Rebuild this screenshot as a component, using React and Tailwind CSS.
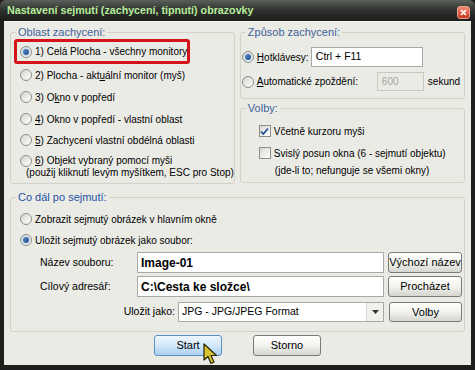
import React from 'react';

const Radio = ({ checked }) => (
  <span className="flex h-[12px] w-[12px] shrink-0 items-center justify-center rounded-full border border-[#8d8e8a] bg-gradient-to-br from-[#d4d4cf] to-white">
    {checked && (
      <span className="h-[6px] w-[6px] rounded-full bg-gradient-to-br from-[#5a8cc6] to-[#1e4f8c] ring-1 ring-[#cfe0f0]" />
    )}
  </span>
);

const Check = ({ checked }) => (
  <span className="flex h-[12px] w-[12px] shrink-0 items-center justify-center border border-[#8d8e8a] bg-gradient-to-br from-[#d8d8d3] to-white">
    {checked && (
      <svg width="9" height="9" viewBox="0 0 9 9">
        <path d="M1 4.5 L3.3 7 L8 1.5" fill="none" stroke="#26509a" strokeWidth="1.8" />
      </svg>
    )}
  </span>
);

const U = ({ children }) => <span className="underline underline-offset-1">{children}</span>;

const Button = ({ children, className = '' }) => (
  <div
    className={`flex items-center justify-center rounded-[3px] border border-[#7a7a78] bg-gradient-to-b from-white via-[#f2f2ee] to-[#d6d6d0] text-[11px] text-black ${className}`}
  >
    {children}
  </div>
);

const Legend = ({ children, color = 'text-[#3d5f98]' }) => (
  <legend className={`ml-[5px] px-[2px] text-[11px] leading-[13px] ${color}`}>{children}</legend>
);

export default function App() {
  return (
    <div className="relative flex h-[370px] w-[475px] flex-col whitespace-nowrap bg-[#1f201e] font-['Liberation_Sans',Arial,sans-serif] text-[10px] text-black">
      {/* title bar */}
      <div className="flex h-[21px] items-center justify-between rounded-t-[6px] bg-gradient-to-b from-[#5b605a] via-[#2e312d] to-[#1b1c1a] pl-[7px] pr-[5px]">
        <span className="text-[10.7px] font-bold text-[#b8ec9c]">Nastavení sejmutí (zachycení, tipnutí) obrazovky</span>
        <span className="mt-[4px] flex h-[13px] w-[13px] items-center justify-center rounded-[3px] border border-[#e9a08c] bg-gradient-to-b from-[#f08a70] to-[#c8301a]">
          <svg width="7" height="7" viewBox="0 0 7 7">
            <path d="M1 1 L6 6 M6 1 L1 6" stroke="white" strokeWidth="1.6" />
          </svg>
        </span>
      </div>

      {/* client area */}
      <div className="mx-[4px] mb-[5px] flex flex-1 flex-col border-t border-[#f6f6f2] bg-[#ebebe6] px-[6px]">
        <div className="mt-[4px] flex gap-[5px]">
          {/* Oblast zachycení */}
          <fieldset className="h-[158px] w-[222px] rounded-[3px] border border-[#d2d2c8]">
            <Legend>Oblast zachycení:</Legend>
            <div className="ml-[3px] flex h-[25px] w-[176px] items-center gap-[3px] rounded-[3px] border-[3px] border-[#d4141a] pl-[3px]">
              <Radio checked />
              <span>1) Celá Plocha - všechny monitory</span>
            </div>
            <div className="flex h-[22px] items-center gap-[3px] pl-[9px]">
              <Radio />
              <span>2) Plocha - akt<U>u</U>ální monitor (myš)</span>
            </div>
            <div className="flex h-[22px] items-center gap-[3px] pl-[9px]">
              <Radio />
              <span>3) O<U>k</U>no v popředí</span>
            </div>
            <div className="flex h-[22px] items-center gap-[3px] pl-[9px]">
              <Radio />
              <span><U>4</U>) Okno v popředí - vlastní oblast</span>
            </div>
            <div className="flex h-[20px] items-center gap-[3px] pl-[9px]">
              <Radio />
              <span><U>5</U>) Zachycení vlastní obdélná oblasti</span>
            </div>
            <div className="flex gap-[3px] pl-[9px] pt-[5px]">
              <Radio />
              <div className="flex flex-col leading-[12px]">
                <span><U>6</U>) Objekt vybraný pomocí myši</span>
                <span className="-ml-[9px]">(použij kliknutí levým myšítkem, ESC pro Stop)</span>
              </div>
            </div>
          </fieldset>

          <div className="flex w-[228px] flex-col gap-[3px]">
            {/* Způsob zachycení */}
            <fieldset className="h-[73px] rounded-[3px] border border-[#d2d2c8]">
              <Legend>Způsob zachycení:</Legend>
              <div className="mt-[8px] flex h-[20px] items-center pl-[1px]">
                <Radio checked />
                <span className="ml-[3px] w-[54px]"><U>H</U>otklávesy:</span>
                <div className="flex h-[20px] w-[112px] items-center border border-[#a9a9a6] bg-white pl-[4px] text-[10.5px]">Ctrl + F11</div>
              </div>
              <div className="mt-[5px] flex h-[19px] items-center pl-[1px]">
                <Radio />
                <span className="ml-[3px] w-[120px]"><U>A</U>utomatické zpoždění:</span>
                <div className="flex h-[19px] w-[47px] items-center border border-[#c8c8c0] bg-[#ebebe6] pl-[4px] text-[#a3a39e]">600</div>
                <span className="ml-[4px]">sekund</span>
              </div>
            </fieldset>

            {/* Volby */}
            <fieldset className="h-[81px] rounded-[3px] border border-[#d2d2c8]">
              <Legend>Volby:</Legend>
              <div className="mt-[9px] flex h-[14px] items-center gap-[3px] pl-[18px]">
                <Check checked />
                <span>Včetně kurzoru myši</span>
              </div>
              <div className="mt-[9px] flex gap-[3px] pl-[18px]">
                <Check />
                <div className="-mt-[2px] flex flex-col leading-[17px]">
                  <span>Svislý posun okna (6 - sejmutí objektu)</span>
                  <span className="ml-[1px]">(jde-li to; nefunguje se všemi okny)</span>
                </div>
              </div>
            </fieldset>
          </div>
        </div>

        {/* Co dál po sejmutí */}
        <fieldset className="mt-[7px] h-[141px] rounded-[3px] border border-[#d2d2c8]">
          <Legend color="text-[#2652a4]">Co dál po sejmutí:</Legend>
          <div className="mt-[5px] flex h-[20px] items-center gap-[3px] pl-[9px]">
            <Radio />
            <span>Zobrazit sejmutý obrázek v hlavním okně</span>
          </div>
          <div className="flex h-[22px] items-center gap-[3px] pl-[9px]">
            <Radio checked />
            <span>Uložit sejmutý obrázek jako soubor:</span>
          </div>
          <div className="mt-[1px] flex h-[21px] items-center pl-[29px]">
            <span className="w-[97px] text-[10.5px]">Název souboru:</span>
            <div className="flex h-[21px] w-[247px] items-center border border-[#a9a9a6] bg-white pl-[3px] text-[12px] font-bold">Image-01</div>
            <Button className="ml-[4px] h-[21px] w-[74px] text-[10.5px]">Výchozí název</Button>
          </div>
          <div className="mt-[3px] flex h-[21px] items-center pl-[29px]">
            <span className="w-[97px] text-[10.5px]">Cílový adresář:</span>
            <div className="flex h-[21px] w-[247px] items-center border border-[#a9a9a6] bg-white pl-[3px] text-[12px] font-bold">C:\Cesta ke složce\</div>
            <Button className="ml-[4px] h-[21px] w-[74px] text-[10.5px]">Procházet</Button>
          </div>
          <div className="mt-[5px] flex h-[20px] items-center justify-end pr-[2px]">
            <span className="mr-[3px] text-[10.5px]">Uložit jako:</span>
            <div className="flex h-[20px] w-[206px] items-center justify-between border border-[#a9a9a6] bg-white pl-[3px] text-[10.5px]">
              <span>JPG - JPG/JPEG Format</span>
              <span className="flex h-full w-[17px] items-center justify-center border-l border-[#d8d8d4] bg-[#f0f0ec]">
                <svg width="7" height="4" viewBox="0 0 7 4">
                  <path d="M0 0 H7 L3.5 4 Z" fill="#333" />
                </svg>
              </span>
            </div>
            <Button className="ml-[5px] h-[20px] w-[73px] text-[10.5px]">Volby</Button>
          </div>
        </fieldset>

        {/* bottom buttons */}
        <div className="mt-[3px] flex justify-center gap-[31px]">
          <div className="flex h-[21px] w-[68px] items-center justify-center rounded-[3px] border border-[#5a8fc8] bg-gradient-to-b from-[#eef6fd] via-[#d2e8fa] to-[#a9d0f0] text-[11px]">
            Start
          </div>
          <Button className="h-[21px] w-[68px]">Storno</Button>
        </div>
      </div>

      {/* mouse cursor */}
      <svg className="absolute left-[203px] top-[343px]" width="16" height="24" viewBox="0 0 16 24">
        <path d="M1 1 L1 17 L5 13.5 L8 20.5 L11 19 L8 12.5 L13.5 12.5 Z" fill="#d8c230" stroke="#2a2408" strokeWidth="1.2" strokeLinejoin="round" />
      </svg>
    </div>
  );
}
